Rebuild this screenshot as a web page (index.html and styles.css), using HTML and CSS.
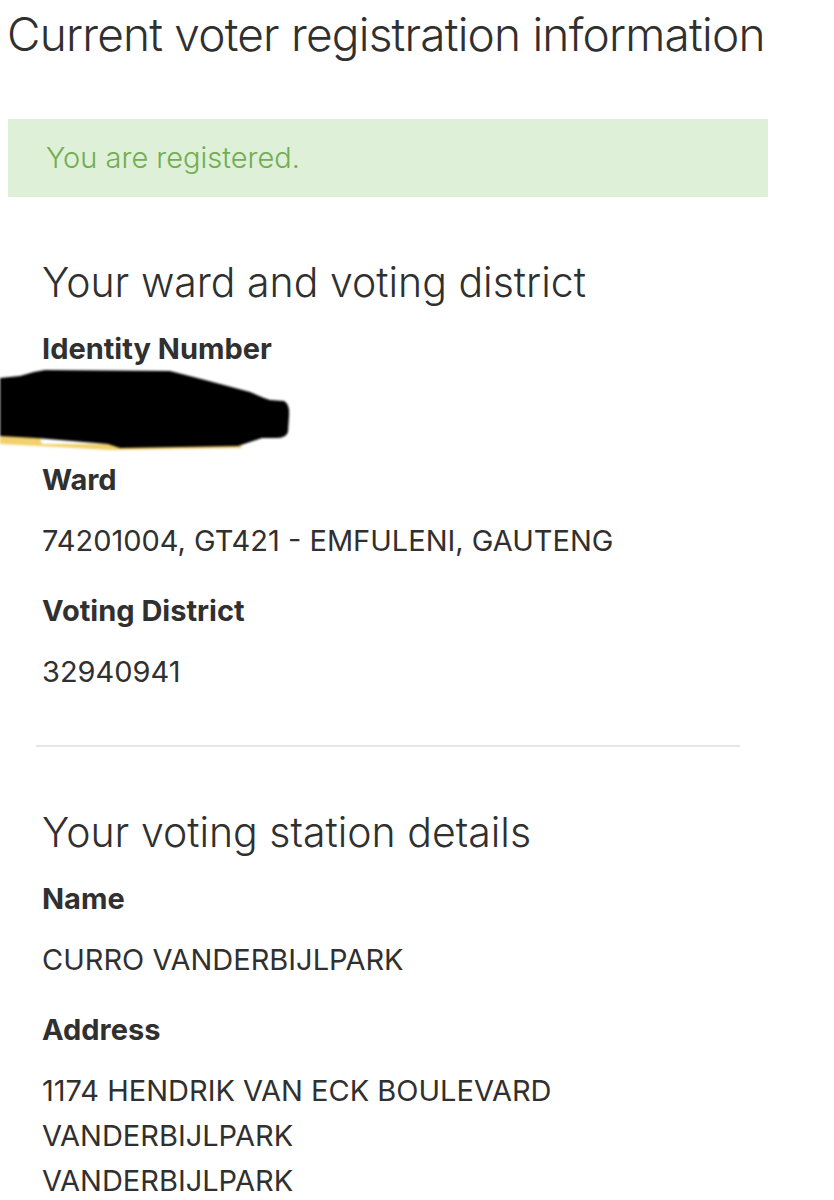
FILE: index.html
```html
<!DOCTYPE html>
<html lang="en">
<head>
    <meta charset="UTF-8">
    <meta name="viewport" content="width=device-width, initial-scale=1.0">
    <title>Voter Registration</title>
    <link rel="stylesheet" href="styles.css">
</head>
<body>
    <div class="page">
        <h1>Current voter registration information</h1>

        <div class="alert-success">You are registered.</div>

        <div class="panel">
            <h2>Your ward and voting district</h2>
            <dl class="fields">
                <dt>Identity Number</dt>
                <dd class="redacted">
                    <svg class="scribble" width="290" height="90" viewBox="0 0 290 90">
                        <path d="M0,66 L38,70 L42,80 L100,80 L240,79 L242,84 L110,86 L40,82 L0,80 Z" fill="#f0c850" opacity="0.85"/>
                        <path d="M0,14 L20,12 L34,8 L45,6 L170,7 L205,16 L250,28 L264,34 L270,36 L284,37 Q290,40 289,52 L288,68 Q286,74 276,74 L262,74 L250,78 L238,82 L120,84 L108,80 L60,76 L36,74 L0,72 Z" fill="#000"/>
                    </svg>
                </dd>
                <dt>Ward</dt>
                <dd>74201004, GT421 - EMFULENI, GAUTENG</dd>
                <dt>Voting District</dt>
                <dd>32940941</dd>
            </dl>

            <hr>

            <h2>Your voting station details</h2>
            <dl class="fields">
                <dt>Name</dt>
                <dd>CURRO VANDERBIJLPARK</dd>
                <dt>Address</dt>
                <dd>1174 HENDRIK VAN ECK BOULEVARD<br>VANDERBIJLPARK<br>VANDERBIJLPARK</dd>
            </dl>
        </div>
    </div>
</body>
</html>
```

FILE: styles.css
```css
body {
    margin: 0;
    font-family: Inter, "Noto Sans", sans-serif;
    color: #303030;
    background-color: #fff;
}
.page {
    width: 760px;
    padding: 0 8px;
}
h1 {
    margin: 6px 0 0 -1px;
    font-size: 46px;
    font-weight: 300;
    line-height: 56px;
    letter-spacing: -0.8px;
    white-space: nowrap;
}
.alert-success {
    margin-top: 57px;
    padding: 21px 38px;
    font-size: 29px;
    font-weight: 300;
    line-height: 36px;
    color: #72ad52;
    background-color: #dff0d8;
}
.panel {
    margin: 0 32px;
}
h2 {
    margin: 61px 0 0 2px;
    font-size: 41px;
    font-weight: 300;
    line-height: 49px;
}
.panel hr + h2 {
    margin-top: 61px;
}
.fields {
    margin: 19px 0 0 2px;
    font-size: 29px;
    line-height: 45px;
}
.fields dt {
    margin-bottom: 16px;
    font-weight: 700;
}
.fields dd {
    margin: 0 0 25px 0;
}
.redacted .scribble {
    display: block;
    margin: -23px 0 -22px -42px;
    filter: blur(1px);
}
hr {
    margin: 51px -4px 0;
    border: none;
    border-top: 2px solid #e6e6e6;
}
```
